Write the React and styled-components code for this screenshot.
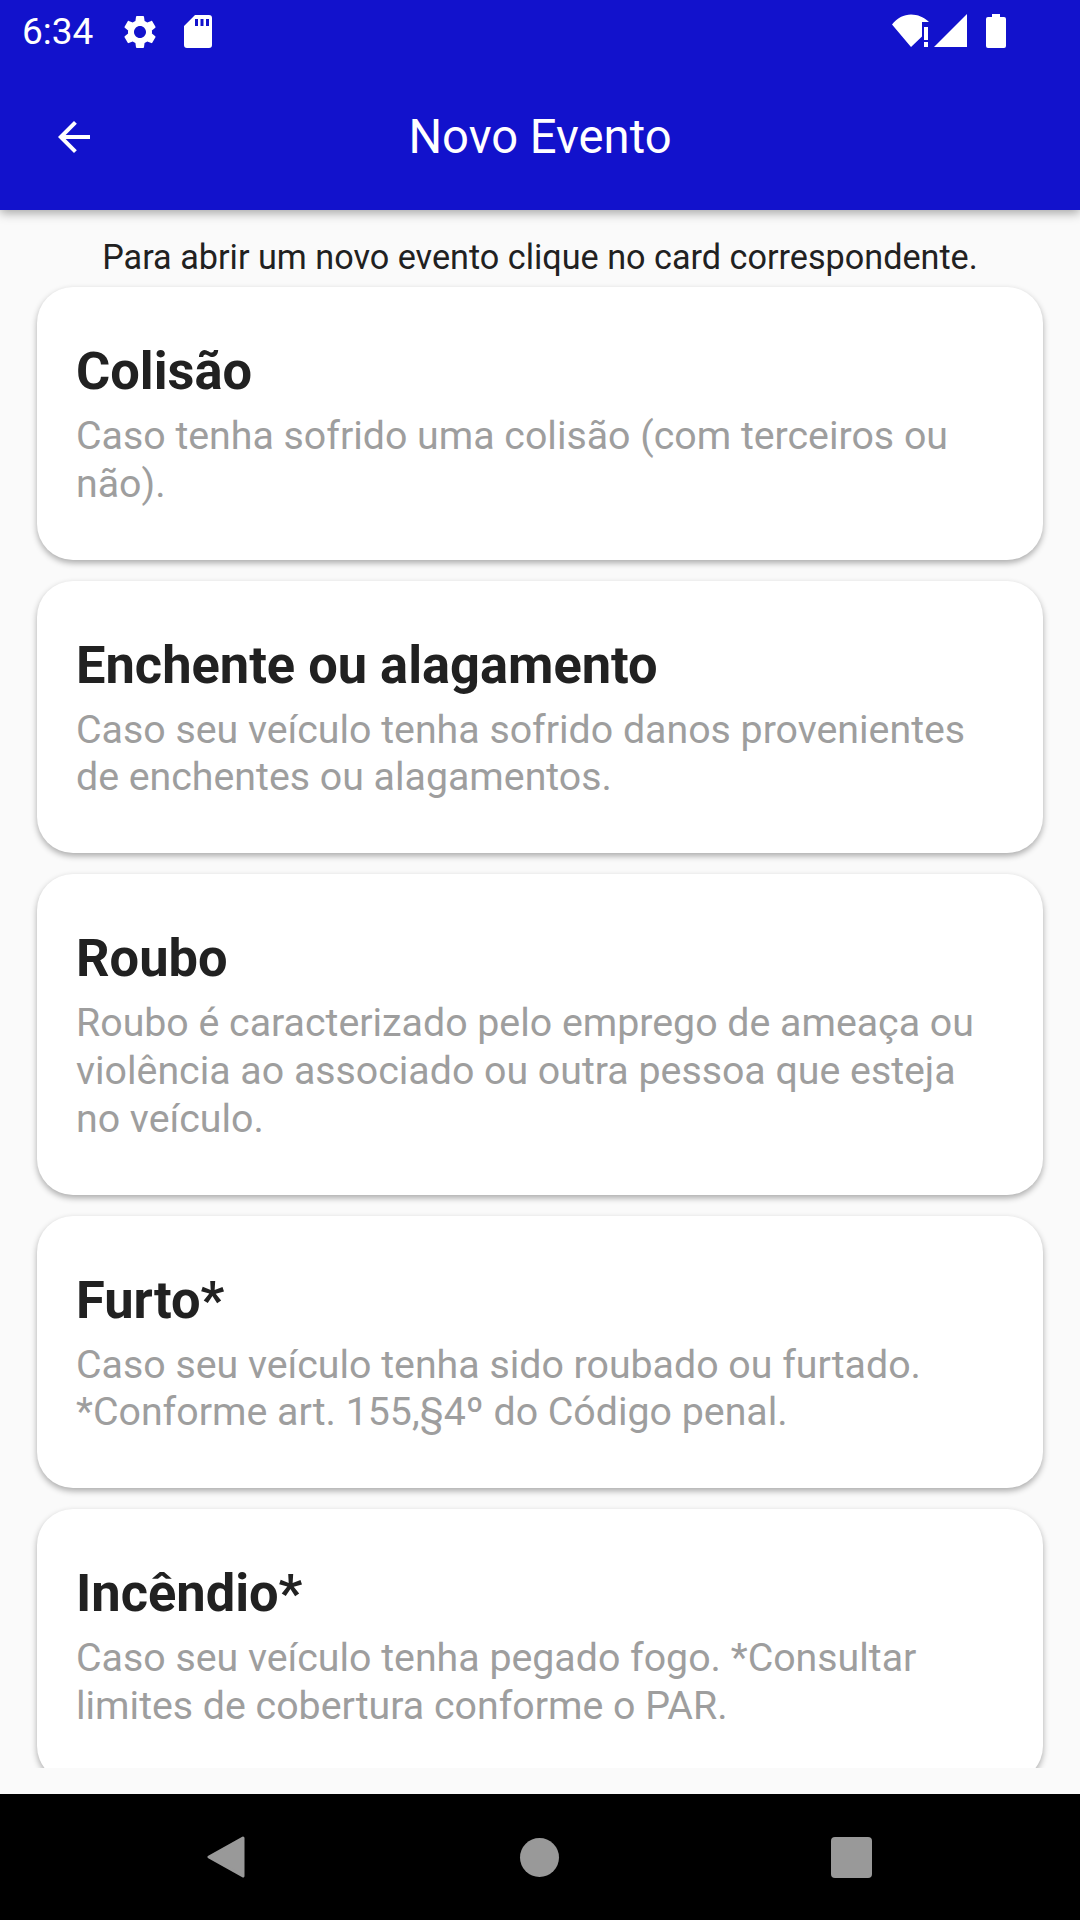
import React from "react";
import styled, { createGlobalStyle } from "styled-components";

const GlobalStyle = createGlobalStyle`
  html, body {
    margin: 0;
    padding: 0;
    background: #fafafa;
  }
  * {
    box-sizing: border-box;
  }
`;

const Screen = styled.div`
  width: 1080px;
  height: 1920px;
  display: flex;
  flex-direction: column;
  font-family: Roboto, "Liberation Sans", sans-serif;
  background: #fafafa;
  overflow: hidden;
`;

const Header = styled.header`
  height: 210px;
  flex: none;
  background: #1212cc;
  color: #ffffff;
  box-shadow: 0 3px 10px rgba(0, 0, 0, 0.35);
  position: relative;
  z-index: 1;
`;

const StatusBar = styled.div`
  height: 63px;
  display: flex;
  align-items: center;
  padding: 0 0 0 22px;
`;

const Clock = styled.span`
  font-size: 37px;
  width: 98px;
`;

const StatusIcons = styled.div`
  display: flex;
  align-items: center;
  gap: ${(p) => p.$gap}px;
  margin-left: ${(p) => p.$left || 0}px;
  margin-top: ${(p) => p.$top || 0}px;
`;

const Toolbar = styled.div`
  height: 147px;
  display: flex;
  align-items: center;
  position: relative;
  padding-left: 50px;
`;

const ToolbarTitle = styled.h1`
  flex: 1;
  margin: 0 0 0 -98px;
  text-align: center;
  font-size: 47.2px;
  font-weight: 400;
`;

const Content = styled.main`
  flex: none;
  height: 1558px;
  padding: 0 37px;
  overflow: hidden;
`;

const Hint = styled.p`
  margin: 0;
  height: 77px;
  padding-top: 24px;
  line-height: 46px;
  font-size: 34.2px;
  text-align: center;
  color: #212121;
  white-space: nowrap;
`;

const CardList = styled.div`
  display: flex;
  flex-direction: column;
  gap: 21px;
`;

const Card = styled.article`
  flex: none;
  background: #ffffff;
  border-radius: 36px;
  padding: 54px 39px 51.5px;
  box-shadow: 0 3px 6px rgba(0, 0, 0, 0.32);
`;

const CardTitle = styled.h2`
  margin: 0;
  font-size: 52.4px;
  line-height: 60px;
  font-weight: 700;
  color: #212121;
`;

const CardText = styled.p`
  margin: 12px 0 0;
  font-size: 39.3px;
  line-height: 47.6px;
  color: #9e9e9e;
`;

const NavSpacer = styled.div`
  flex: 1;
`;

const NavBar = styled.nav`
  height: 126px;
  flex: none;
  background: #000000;
  display: flex;
  align-items: center;
  justify-content: space-between;
  padding: 0 208px 0 207px;
`;

const HomeDot = styled.span`
  width: 39px;
  height: 39px;
  margin-left: 2px;
  border-radius: 50%;
  background: #999999;
`;

const RecentSquare = styled.span`
  width: 41px;
  height: 41px;
  border-radius: 4px;
  background: #999999;
`;

const events = [
  {
    title: "Colisão",
    text: "Caso tenha sofrido uma colisão (com terceiros ou não).",
  },
  {
    title: "Enchente ou alagamento",
    text: "Caso seu veículo tenha sofrido danos provenientes de enchentes ou alagamentos.",
  },
  {
    title: "Roubo",
    text: "Roubo é caracterizado pelo emprego de ameaça ou violência ao associado ou outra pessoa que esteja no veículo.",
  },
  {
    title: "Furto*",
    text: "Caso seu veículo tenha sido roubado ou furtado. *Conforme art. 155,§4º do Código penal.",
  },
  {
    title: "Incêndio*",
    text: "Caso seu veículo tenha pegado fogo. *Consultar limites de cobertura conforme o PAR.",
  },
];

const GearIcon = () => (
  <svg width="40" height="40" viewBox="0 0 24 24" fill="#fff">
    <path d="M19.14 12.94c.04-.3.06-.61.06-.94 0-.32-.02-.64-.07-.94l2.03-1.58c.18-.14.23-.41.12-.61l-1.92-3.32c-.12-.22-.37-.29-.59-.22l-2.39.96c-.5-.38-1.03-.7-1.62-.94l-.36-2.54c-.04-.24-.24-.41-.48-.41h-3.84c-.24 0-.43.17-.47.41l-.36 2.54c-.59.24-1.13.57-1.62.94l-2.39-.96c-.22-.08-.47 0-.59.22L2.74 8.87c-.12.21-.08.47.12.61l2.03 1.58c-.05.3-.09.63-.09.94s.02.64.07.94l-2.03 1.58c-.18.14-.23.41-.12.61l1.92 3.32c.12.22.37.29.59.22l2.39-.96c.5.38 1.03.7 1.62.94l.36 2.54c.05.24.24.41.48.41h3.84c.24 0 .44-.17.47-.41l.36-2.54c.59-.24 1.13-.56 1.62-.94l2.39.96c.22.08.47 0 .59-.22l1.92-3.32c.12-.22.07-.47-.12-.61l-2.01-1.58zM12 15.6c-1.98 0-3.6-1.62-3.6-3.6s1.62-3.6 3.6-3.6 3.6 1.62 3.6 3.6-1.62 3.6-3.6 3.6z" />
  </svg>
);

const SdCardIcon = () => (
  <svg width="28" height="33" viewBox="0 0 28 33" fill="#fff">
    <path
      fillRule="evenodd"
      d="M11 0h14a3 3 0 0 1 3 3v27a3 3 0 0 1-3 3H3a3 3 0 0 1-3-3V11zM11 4v7h3V4zM16.500 4v7h3V4zM22 4v7h3V4z"
    />
  </svg>
);

const WifiAlertIcon = () => (
  <svg width="40" height="34" viewBox="0 0 40 34" fill="#fff">
    <path d="M0 10.500C5 4 12 0.500 19 0.500c6.500 0 13 2.700 18 7.500h-7v14.500L19 33z" />
    <path d="M32 13h4v13h-4zM32 28h4v5h-4z" />
  </svg>
);

const SignalIcon = () => (
  <svg width="33" height="33" viewBox="0 0 33 33" fill="#fff">
    <path d="M33 0v33H0z" />
  </svg>
);

const BatteryIcon = () => (
  <svg width="20" height="34" viewBox="0 0 20 34" fill="#fff">
    <path d="M6 0h8v3h4a2 2 0 0 1 2 2v27a2 2 0 0 1-2 2H2a2 2 0 0 1-2-2V5a2 2 0 0 1 2-2h4z" />
  </svg>
);

const BackArrow = () => (
  <svg width="48" height="48" viewBox="0 0 24 24" fill="#fff">
    <path d="M20 11H7.830l5.590-5.590L12 4l-8 8 8 8 1.410-1.410L7.830 13H20v-2z" />
  </svg>
);

const NavBack = () => (
  <svg width="38" height="42" viewBox="0 0 38 42">
    <path
      d="M36 2 2 21l34 19z"
      fill="#999"
      stroke="#999"
      strokeWidth="3"
      strokeLinejoin="round"
    />
  </svg>
);

const App = () => {
  return (
    <Screen>
      <GlobalStyle />
      <Header>
        <StatusBar>
          <Clock>6:34</Clock>
          <StatusIcons $gap={24}>
            <GearIcon />
            <SdCardIcon />
          </StatusIcons>
          <StatusIcons $gap={2} $left={680} $top={-2}>
            <WifiAlertIcon />
            <SignalIcon />
          </StatusIcons>
          <StatusIcons $gap={0} $left={19} $top={-1}>
            <BatteryIcon />
          </StatusIcons>
        </StatusBar>
        <Toolbar>
          <BackArrow />
          <ToolbarTitle>Novo Evento</ToolbarTitle>
        </Toolbar>
      </Header>
      <Content>
        <Hint>Para abrir um novo evento clique no card correspondente.</Hint>
        <CardList>
          {events.map((event) => (
            <Card key={event.title}>
              <CardTitle>{event.title}</CardTitle>
              <CardText>{event.text}</CardText>
            </Card>
          ))}
        </CardList>
      </Content>
      <NavSpacer />
      <NavBar>
        <NavBack />
        <HomeDot />
        <RecentSquare />
      </NavBar>
    </Screen>
  );
};

export default App;
